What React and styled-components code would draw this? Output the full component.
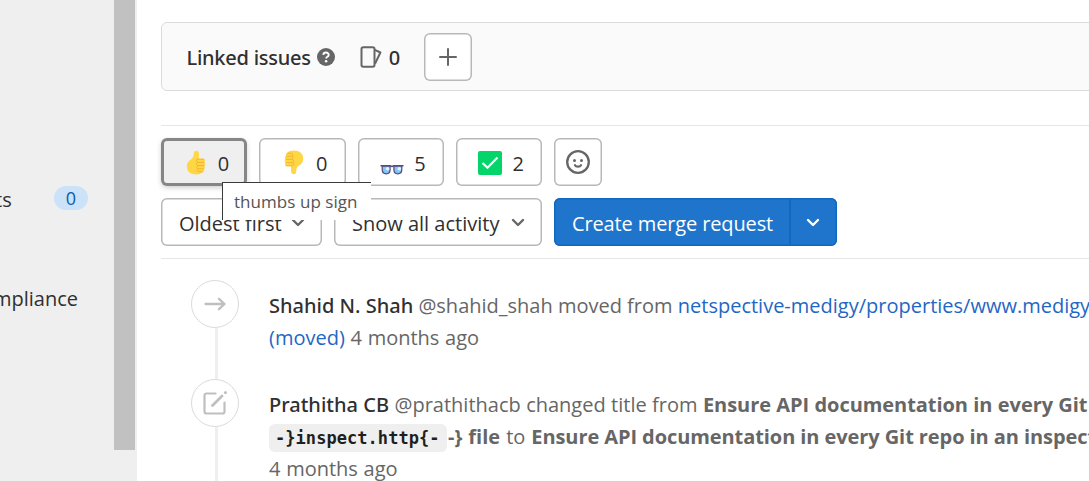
import React from 'react';
import styled, { createGlobalStyle, css } from 'styled-components';

const GlobalStyle = createGlobalStyle`
  *, *::before, *::after { box-sizing: border-box; }
  body {
    margin: 0;
    overflow: hidden;
    background: #fff;
    color: #303030;
    font: 400 20px/31.5px "Open Sans", "Noto Sans", sans-serif;
  }
  svg { display: block; flex: none; }
`;

const Page = styled.div`
  display: flex;
  width: 100%;
  height: 481px;
  overflow: hidden;
`;

const Sidebar = styled.aside`
  display: flex;
  flex: none;
  width: 137px;
  background: #efefef;
`;

const Nav = styled.nav`
  width: 114px;
  padding-top: 182px;
  overflow: hidden;
`;

const NavItem = styled.div`
  display: flex;
  align-items: center;
  height: 32px;
  margin-left: ${({ $shift }) => $shift}px;
  margin-bottom: 67px;
  white-space: nowrap;
`;

const Badge = styled.span`
  width: 34px;
  height: 24px;
  margin-left: auto;
  margin-right: 26px;
  border-radius: 12px;
  background: #cbe2f9;
  color: #0b5cad;
  font-size: 18px;
  line-height: 25px;
  text-align: center;
`;

const ScrollThumb = styled.div`
  width: 21px;
  height: 450px;
  background: #c1c1c1;
`;

const Main = styled.main`
  display: flex;
  flex: 1;
  flex-direction: column;
  min-width: 0;
  padding: 22px 0 0 24px;
`;

const LinkedPanel = styled.section`
  display: flex;
  flex: none;
  align-items: center;
  height: 69px;
  margin-right: -24px;
  padding-left: 24.5px;
  border: 1px solid #dbdbdb;
  border-radius: 6px;
  background: #fafafa;
`;

const PanelTitle = styled.h3`
  margin: 2px 6px 0 0;
  font: 500 20px/31px "Noto Sans", sans-serif;
  letter-spacing: -0.25px;
`;

const PanelCount = styled.span`
  margin: 2px 24px 0 7px;
  font: 500 20px/31px "Noto Sans", sans-serif;
`;

const StackIcon = styled.svg`
  margin-left: 25px;
`;

const outlined = css`
  display: flex;
  flex: none;
  align-items: center;
  height: 48px;
  border: 0;
  border-radius: 6px;
  background: #fff;
  box-shadow: inset 0 0 0 1.5px #b8b8b8;
  color: #303030;
  font: inherit;
`;

const IconButton = styled.button`
  ${outlined}
  justify-content: center;
  width: 48px;
  padding: 0;
`;

const Divider = styled.hr`
  flex: none;
  width: 100%;
  height: 1px;
  margin: ${({ $top }) => $top}px 0 0;
  border: 0;
  background: #e6e6e6;
`;

const Reactions = styled.div`
  display: flex;
  gap: 12px;
  margin-top: 12px;
`;

const Reaction = styled.button`
  ${outlined}
  position: relative;
  justify-content: flex-end;
  gap: ${({ $gap = 12 }) => $gap}px;
  width: 86.25px;
  padding: 0 18px 0 0;
  ${({ $active }) => $active && css`
    background: #efefef;
    box-shadow: inset 0 0 0 3px #868686, 0 2px 5px rgba(0, 0, 0, 0.18);
  `}
`;

const Count = styled.span`
  padding-top: 3px;
`;

const Tooltip = styled.div`
  position: absolute;
  z-index: 2;
  top: 44px;
  left: 61px;
  width: 149px;
  height: 38px;
  padding-left: 11px;
  border: solid #3a3a3a;
  border-width: 1px 0 0 1px;
  background: #fff;
  color: #555;
  font-size: 17px;
  line-height: 38px;
  letter-spacing: 0.05px;
  text-align: left;
  white-space: nowrap;
`;

const Filters = styled.div`
  display: flex;
  gap: 12px;
  margin-top: 12px;
`;

const Select = styled.button`
  ${outlined}
  justify-content: space-between;
  width: ${({ $width }) => $width}px;
  padding: 0 17px 0 18px;
  white-space: nowrap;
`;

const Label = styled.span`
  padding-top: 3px;
`;

const SplitButton = styled.div`
  display: flex;
  width: 283px;
  height: 48px;
  border-radius: 6px;
  background: #1f75cb;
  box-shadow: inset 0 0 0 1.5px #1068bf;
  color: #fff;
`;

const SplitMain = styled.button`
  flex: 1;
  padding: 3px 0 0 18px;
  border: 0;
  border-right: 2px solid #1068bf;
  background: none;
  color: inherit;
  font: inherit;
  letter-spacing: -0.13px;
  text-align: left;
  white-space: nowrap;
`;

const SplitToggle = styled.button`
  display: flex;
  align-items: center;
  justify-content: center;
  width: 46px;
  padding: 0 2px 0 0;
  border: 0;
  background: none;
  color: inherit;
`;

const Timeline = styled.ul`
  margin: 21px 0 0;
  padding: 0 0 0 30px;
  list-style: none;
`;

const TimelineItem = styled.li`
  display: flex;
  gap: 30px;
  height: ${({ $height }) => $height}px;
`;

const Rail = styled.div`
  display: flex;
  flex: none;
  flex-direction: column;
  width: 48px;
`;

const Marker = styled.div`
  display: flex;
  flex: none;
  align-items: center;
  justify-content: center;
  height: 48px;
  border: 1px solid #dbdbdb;
  border-radius: 50%;
  background: #fff;
`;

const Connector = styled.div`
  flex: 1;
  width: 3px;
  margin-left: 24px;
  background: #efefef;
`;

const Note = styled.div`
  padding-top: 9.5px;
  color: #666;
  white-space: nowrap;
`;

const Author = styled.span`
  color: #303030;
  font-family: "Noto Sans", sans-serif;
  font-weight: 500;
`;

const Link = styled.a`
  color: #1f67c4;
`;

const Code = styled.code`
  display: inline-block;
  height: 28px;
  margin-right: 1.5px;
  padding: 0 7px 0 6px;
  border-radius: 6px;
  background: #efefef;
  color: #1f1f1f;
  font: 700 17px/28px "DejaVu Sans Mono", monospace;
  letter-spacing: 0.05px;
  vertical-align: 0;
`;

const NoteLine = styled.div`
  height: ${({ $height = 32 }) => $height}px;
  word-spacing: ${({ $spread = 0 }) => $spread}px;
`;

const OldTitle = styled.b`
  letter-spacing: -0.05px;
`;

const NewTitle = styled.b`
  letter-spacing: -0.08px;
  word-spacing: 0;
`;

const Chevron = ({ color = '#666' }) => (
  <svg width="14" height="10" viewBox="0 0 14 10" fill="none" stroke={color} strokeWidth="2.4" strokeLinecap="round" strokeLinejoin="round">
    <path d="M2 3l5 5 5-5" />
  </svg>
);

const ThumbPaths = () => (
  <>
    <path fill="#ffd644" d="M7.800 3.300C7.800 1.700 8.800.8 10.200.8c1.500 0 2.700 1 2.700 2.700v5.300h4c2.100 0 2.800 2.300 1.400 3.400 1.500.9 1.400 2.900.1 3.500 1 1.100.8 2.700-.4 3.400.6 1.400-.1 2.700-1.200 3-1.500 1.700-3.800 2.400-6.600 2.400C4.200 24.500.8 21.400.8 16.600c0-3.500 1.500-5.500 4.200-7.200 1.900-1.200 2.800-3.200 2.800-6.100z" />
    <path fill="none" stroke="#f3b02f" strokeWidth=".9" strokeLinecap="round" d="M17.800 9.200h-6c-1.900.2-1.900 2.900 0 3.100h6M11.500 12.500c-1.500.5-1.400 2.800.3 3.100h6M11.700 15.800c-1.300.6-1.100 2.800.5 3h5.200M12 19c-1 .6-.7 2.600.7 2.800h3.700" />
  </>
);

const ThumbUp = () => (
  <svg width="20" height="25" viewBox="0 0 20 25"><ThumbPaths /></svg>
);

const ThumbDown = () => (
  <svg width="20" height="25" viewBox="0 0 20 25"><g transform="rotate(180 10 12.5)"><ThumbPaths /></g></svg>
);

const Glasses = () => (
  <svg width="24" height="28" viewBox="0 0 24 28">
    <path fill="#80c6fb" stroke="#594a78" strokeWidth="1.200" d="M2.200 18h7.900v3.500c0 2.800-1.500 4.300-3.900 4.300s-4-1.500-4-4.300zM13.900 18h7.900v3.500c0 2.800-1.600 4.300-4 4.300s-3.900-1.500-3.900-4.300z" />
    <path fill="none" stroke="#594a78" strokeWidth="1.500" d="M.5 17.800h10c1 .9 2 .9 3 0h10" />
    <circle cx="7.600" cy="20.800" r="1.800" fill="#e2f4ff" /><circle cx="19.300" cy="20.800" r="1.800" fill="#e2f4ff" />
  </svg>
);

const CheckMark = () => (
  <svg width="24" height="26" viewBox="0 0 24 26">
    <rect y="2" width="24" height="24" rx="2" fill="#03d56b" />
    <path d="M4.500 14l5 4.800L19.500 8.500" fill="none" stroke="#fff" strokeWidth="2.200" />
  </svg>
);

const Smiley = () => (
  <svg width="24" height="24" viewBox="0 0 24 24">
    <circle cx="12" cy="12" r="10.800" fill="none" stroke="#666" strokeWidth="2.300" />
    <circle cx="8.500" cy="10.600" r="1.500" fill="#666" /><circle cx="15.500" cy="10.600" r="1.500" fill="#666" />
    <path d="M9 15.200c1 1.900 5 1.900 6 0" fill="none" stroke="#666" strokeWidth="2.200" strokeLinecap="round" />
  </svg>
);

const Help = () => (
  <svg width="18" height="18" viewBox="0 0 18 18">
    <circle cx="9" cy="9" r="9" fill="#666" />
    <path d="M6.300 6.900C6.500 3.700 11.800 3.800 11.700 6.900c0 1.900-2.600 1.900-2.600 3.700" fill="none" stroke="#fff" strokeWidth="1.900" />
    <circle cx="9.100" cy="13.300" r="1.300" fill="#fff" />
  </svg>
);

export default function App() {
  return (
    <Page>
      <GlobalStyle />
      <Sidebar>
        <Nav>
          <NavItem $shift={-5}>
            <Label>ts</Label>
            <Badge>0</Badge>
          </NavItem>
          <NavItem $shift={-7}><Label>mpliance</Label></NavItem>
        </Nav>
        <ScrollThumb />
      </Sidebar>
      <Main>
        <LinkedPanel>
          <PanelTitle>Linked issues</PanelTitle>
          <Help />
          <StackIcon width="22" height="22" viewBox="0 0 22 22" fill="none" stroke="#666" strokeWidth="2" strokeLinejoin="round">
            <rect x="1.500" y="1.200" width="13" height="19.600" rx="1.800" />
            <path d="M14.800 3.800l5.600 2.700L15 17.800" />
          </StackIcon>
          <PanelCount>0</PanelCount>
          <IconButton aria-label="Add">
            <svg width="18" height="18" viewBox="0 0 18 18" stroke="#666" strokeWidth="2" strokeLinecap="round">
              <path d="M9 1v16M1 9h16" />
            </svg>
          </IconButton>
        </LinkedPanel>
        <Divider $top={34} />
        <Reactions>
          <Reaction $active>
            <ThumbUp />
            <Count>0</Count>
            <Tooltip>thumbs up sign</Tooltip>
          </Reaction>
          <Reaction><ThumbDown /><Count>0</Count></Reaction>
          <Reaction $gap={10}><Glasses /><Count>5</Count></Reaction>
          <Reaction $gap={11}><CheckMark /><Count>2</Count></Reaction>
          <IconButton aria-label="Add reaction"><Smiley /></IconButton>
        </Reactions>
        <Filters>
          <Select $width={161}><Label>Oldest first</Label><Chevron /></Select>
          <Select $width={208}><Label>Show all activity</Label><Chevron /></Select>
          <SplitButton>
            <SplitMain>Create merge request</SplitMain>
            <SplitToggle aria-label="More options"><Chevron color="#fff" /></SplitToggle>
          </SplitButton>
        </Filters>
        <Divider $top={12} />
        <Timeline>
          <TimelineItem $height={99}>
            <Rail>
              <Marker>
                <svg width="22" height="14" viewBox="0 0 22 14" fill="none" stroke="#bfbfbf" strokeWidth="2.300" strokeLinecap="round" strokeLinejoin="round">
                  <path d="M1.500 7h19M15 1.800L20.500 7 15 12.200" />
                </svg>
              </Marker>
              <Connector />
            </Rail>
            <Note>
              <NoteLine><Author>Shahid N. Shah</Author> @shahid_shah moved from <Link>netspective-medigy/properties/www.medigy</Link></NoteLine>
              <NoteLine $spread={0.5}><Link>(moved)</Link> 4 months ago</NoteLine>
            </Note>
          </TimelineItem>
          <TimelineItem $height={130}>
            <Rail>
              <Marker>
                <svg width="24" height="24" viewBox="0 0 24 24" fill="none" stroke="#bfbfbf" strokeWidth="2.200" strokeLinecap="round" strokeLinejoin="round">
                  <path d="M12.500 2.500H3.500a2 2 0 0 0-2 2v16a2 2 0 0 0 2 2h16a2 2 0 0 0 2-2v-9" />
                  <path d="M9.500 14.500L19 5M22.300 1.700l.2-.2" strokeWidth="2.800" />
                </svg>
              </Marker>
              <Connector />
            </Rail>
            <Note>
              <NoteLine $spread={0.2}><Author>Prathitha CB</Author> @prathithacb changed title from <OldTitle>Ensure API documentation in every Git</OldTitle></NoteLine>
              <NoteLine $spread={0.8}><Code>-&#125;inspect.http&#123;-</Code><b>-&#125; file</b> to <NewTitle>Ensure API documentation in every Git repo in an inspect</NewTitle></NoteLine>
              <NoteLine $spread={0.5}>4 months ago</NoteLine>
            </Note>
          </TimelineItem>
        </Timeline>
      </Main>
    </Page>
  );
}
